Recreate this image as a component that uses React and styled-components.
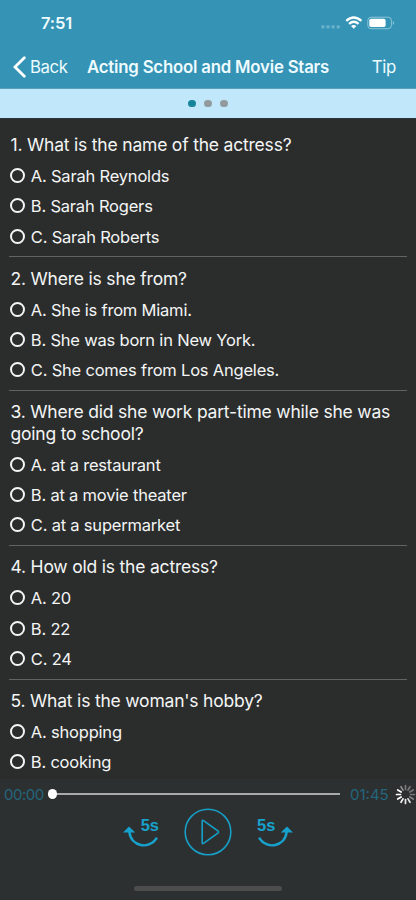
import React from 'react';
import styled, { createGlobalStyle } from 'styled-components';

const Global = createGlobalStyle`
  * { box-sizing: border-box; }
  body { margin: 0; background: #2b2d2d; font-family: Inter, Roboto, sans-serif; }
`;
const Screen = styled.div`
  width: 416px; height: 900px; overflow: hidden;
  display: flex; flex-direction: column;
  background: #2b2d2d; color: #f4f5f5;
`;
const Header = styled.header`
  height: 89px; flex: none; background: #3594b5; color: #eefbff;
  border-bottom: 1px solid #5aa0b8;
`;
const StatusBar = styled.div`
  height: 45px; padding: 1px 20px 0 41px;
  display: flex; align-items: center; justify-content: space-between;
`;
const Clock = styled.span`
  font-size: 16.5px; font-weight: 600; letter-spacing: -0.1px;
`;
const StatusIcons = styled.svg`
  width: 76px; height: 20px; display: block;
`;
const NavBar = styled.nav`
  height: 43px; padding: 0 20px 0 12px; display: flex; align-items: center;
`;
const BackButton = styled.div`
  width: 75px; display: flex; align-items: center; gap: 4px;
  font-size: 16.8px; letter-spacing: -0.4px;
`;
const Title = styled.h1`
  margin: 0; flex: 1; font-size: 16.8px; font-weight: 600;
  letter-spacing: -0.2px; white-space: nowrap;
`;
const Tip = styled.span`font-size: 16.8px; letter-spacing: -0.3px;`;
const Pager = styled.div`
  height: 30px; flex: none; background: #c1e8fa; border-bottom: 1px solid #293438;
  display: flex; align-items: center; justify-content: center; gap: 8.6px;
`;
const Dot = styled.span`
  width: 7.4px; height: 7.4px; border-radius: 50%;
  background: ${(p) => (p.$active ? '#168499' : '#929a9e')};
`;
const List = styled.main`
  height: 660px; flex: none; padding: 4.8px 9px 0 8.5px; overflow: hidden;
`;
const Item = styled.section`
  padding: 10.2px 0 4.6px 2px; border-bottom: 1px solid #626464;
`;
const Question = styled.p`
  margin: 0 0 5.2px; font-size: 17.5px; line-height: 21.5px;
  letter-spacing: -0.2px; white-space: pre-line;
`;
const Option = styled.label`
  height: 30.4px; display: flex; align-items: center; gap: 5.8px;
  font-size: 16.5px; letter-spacing: -0.2px; white-space: nowrap;
`;
const Radio = styled.span`
  width: 15px; height: 15px; flex: none; border: 2px solid #f4f5f5; border-radius: 50%;
  margin: -1px 0 0 -0.5px;
`;
const Player = styled.footer`
  flex: 1; background: #2d3031; display: flex; flex-direction: column; align-items: center;
`;
const Progress = styled.div`
  width: 416px; height: 29px; padding: 1px 0 0 4px; display: flex; align-items: center;
  color: #24667c; font-size: 15px;
`;
const Time = styled.span`
  width: ${(p) => p.$width}px; letter-spacing: ${(p) => p.$tracking}px;
`;
const Track = styled.div`
  width: 292px; height: 2px; background: #a9abab; margin-right: 10px;
  display: flex; align-items: center;
`;
const Thumb = styled.span`
  width: 9.4px; height: 9.4px; flex: none; border-radius: 50%; background: #fff;
`;
const Spinner = styled.svg`width: 21px; height: 21px; flex: none; margin-left: auto;`;
const Controls = styled.div`
  width: 170px; height: 48px; display: flex; align-items: center; justify-content: space-between;
`;
const SkipButton = styled.div`
  width: 36px; height: 32px; display: flex; flex-direction: column;
  align-items: ${(p) => (p.$forward ? 'flex-start' : 'flex-end')};
  color: #17a2cb; font-family: "Liberation Sans", sans-serif;
  font-size: 16.5px; font-weight: 700; line-height: 18px;
`;
const SkipArrow = styled.svg`
  width: 36px; height: 24px; margin-top: -10px; overflow: visible; flex: none;
  transform: ${(p) => (p.$forward ? 'scaleX(-1)' : 'none')};
`;
const Play = styled.svg`width: 48px; height: 48px;`;
const HomeIndicator = styled.div`
  width: 148px; height: 5px; margin-top: 30px; border-radius: 3px; background: #4d4d4d;
`;

const questions = [
  ['1. What is the name of the actress?', 'A. Sarah Reynolds', 'B. Sarah Rogers', 'C. Sarah Roberts'],
  ['2. Where is she from?', 'A. She is from Miami.', 'B. She was born in New York.', 'C. She comes from Los Angeles.'],
  ['3. Where did she work part-time while she was\ngoing to school?', 'A. at a restaurant', 'B. at a movie theater', 'C. at a supermarket'],
  ['4. How old is the actress?', 'A. 20', 'B. 22', 'C. 24'],
  ["5. What is the woman's hobby?", 'A. shopping', 'B. cooking'],
];
const spokes = [0.35, 0.35, 0.35, 0.35, 0.4, 0.85, 0.9, 0.95, 1, 1, 1, 0.45];

function Skip({ forward }) {
  return (
    <SkipButton $forward={forward}>
      5s
      <SkipArrow $forward={forward} viewBox="0 0 36 24">
        <path d="M0 8.5 6 2.5 12.2 8.5Z" fill="#17a2cb" />
        <path d="M6.3 7.5C8 23 26 26 34 13.8" fill="none" stroke="#17a2cb" strokeWidth="2.5" />
      </SkipArrow>
    </SkipButton>
  );
}

export default function App() {
  return (
    <Screen>
      <Global />
      <Header>
        <StatusBar>
          <Clock>7:51</Clock>
          <StatusIcons viewBox="0 0 76 20">
            <g fill="#68b1ca">
              <rect x="1.3" y="12.2" width="3.2" height="3.2" rx="1" /><rect x="6.4" y="12.2" width="3.2" height="3.2" rx="1" />
              <rect x="11.5" y="12.2" width="3.2" height="3.2" rx="1" /><rect x="16.6" y="12.2" width="3.2" height="3.2" rx="1" />
            </g>
            <g fill="none" stroke="#fff" strokeWidth="2.3">
              <path d="M26.3 7.8Q33.6 1.1 41.4 7.8" /><path d="M29.1 10.9Q33.7 6.7 38.6 10.9" />
            </g>
            <path d="M31 13Q33.7 10.9 36.4 13L33.7 15.8Z" fill="#fff" />
            <rect x="47.8" y="4.2" width="23.6" height="11.5" rx="3.2" fill="none" stroke="#8ac5d9" />
            <rect x="49.3" y="5.8" width="16.3" height="8.3" rx="1.8" fill="#fff" />
            <path d="M72.8 8v4Q75.6 10 72.8 8Z" fill="#8ac5d9" />
          </StatusIcons>
        </StatusBar>
        <NavBar>
          <BackButton>
            <svg width="14" height="22" viewBox="0 0 14 22">
              <path d="M12.3 1.7 3 11l9.3 9.3" fill="none" stroke="#fff" strokeWidth="2.8" strokeLinecap="round" />
            </svg>
            Back
          </BackButton>
          <Title>Acting School and Movie Stars</Title>
          <Tip>Tip</Tip>
        </NavBar>
      </Header>
      <Pager><Dot $active /><Dot /><Dot /></Pager>
      <List>
        {questions.map(([q, ...options]) => (
          <Item key={q}>
            <Question>{q}</Question>
            {options.map((o) => <Option key={o}><Radio />{o}</Option>)}
          </Item>
        ))}
      </List>
      <Player>
        <Progress>
          <Time $width={44} $tracking={-0.5}>00:00</Time>
          <Track><Thumb /></Track>
          <Time $width={39} $tracking={0}>01:45</Time>
          <Spinner viewBox="-10.5 -10.5 21 21">
            {spokes.map((o, i) => (
              <path key={i} d="M0-5V-9" transform={`rotate(${i * 30})`} stroke="#fff" strokeOpacity={o} strokeWidth="1.7" strokeLinecap="round" />
            ))}
          </Spinner>
        </Progress>
        <Controls>
          <Skip />
          <Play viewBox="0 0 48 48">
            <circle cx="24" cy="24" r="22.8" fill="none" stroke="#179fc8" strokeWidth="1.6" />
            <path d="M18.2 13.2V34.8Q18.2 36.2 19.5 35.4L34.2 24.8Q35 24 34.2 23.2L19.5 12.6Q18.2 11.8 18.2 13.2Z" fill="none" stroke="#179fc8" strokeWidth="1.6" />
          </Play>
          <Skip forward />
        </Controls>
        <HomeIndicator />
      </Player>
    </Screen>
  );
}
